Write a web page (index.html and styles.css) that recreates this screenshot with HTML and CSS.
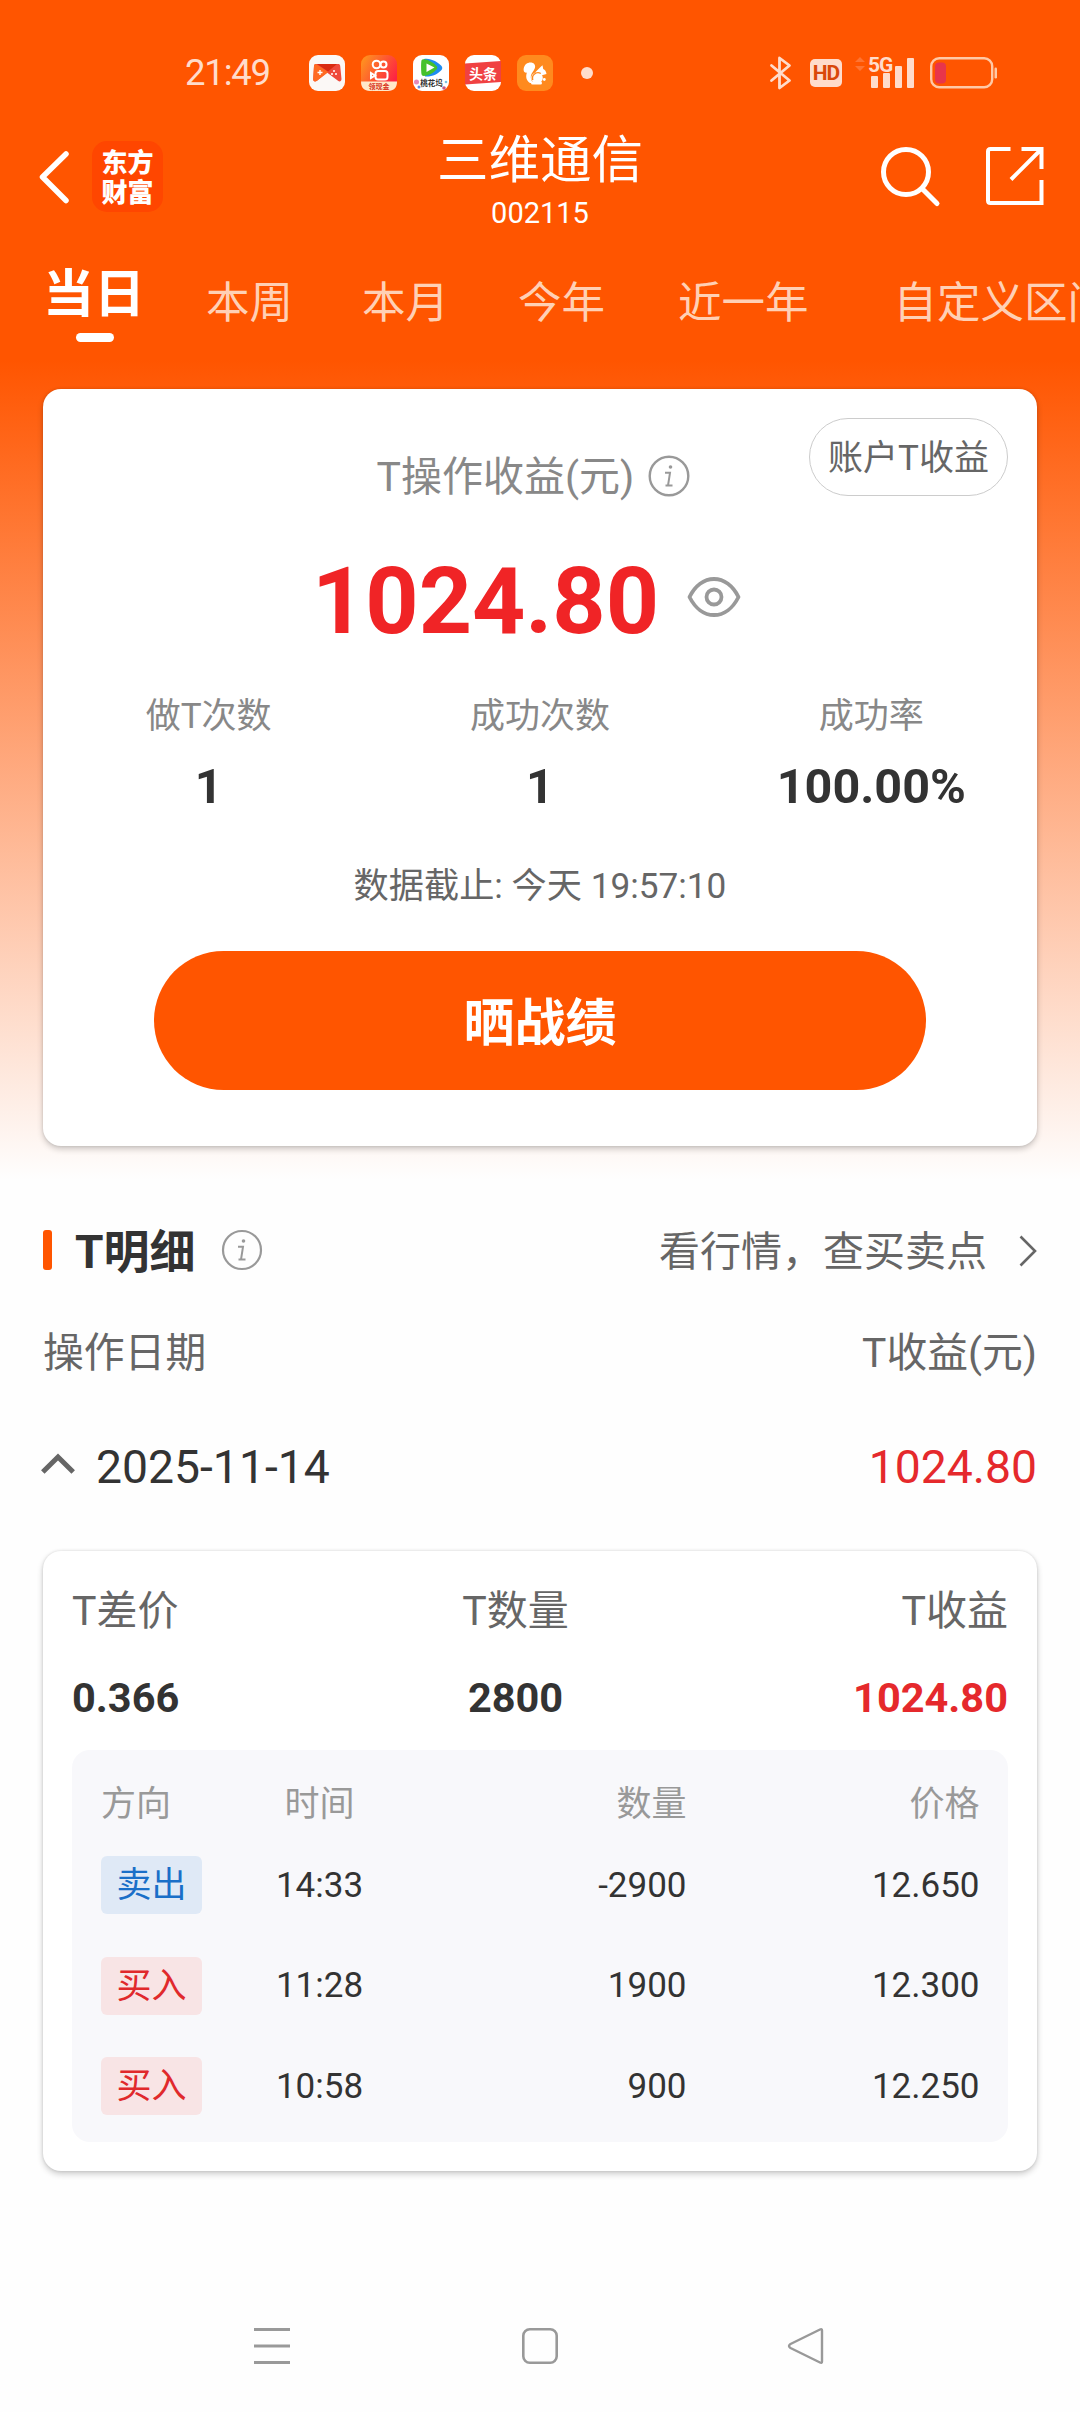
FILE: index.html
```html
<!DOCTYPE html>
<html lang="zh-CN">
<head>
  <meta charset="UTF-8">
  <meta name="viewport" content="width=device-width, initial-scale=1.0">
  <title>三维通信 002115</title>
  <link rel="stylesheet" href="styles.css">
</head>
<body>

  <!-- 状态栏 -->
  <div class="statusbar">
    <span class="statusbar__time">21:49</span>
    <div class="statusbar__apps">
      <svg width="36" height="36" viewBox="0 0 36 36">
        <rect width="36" height="36" rx="9" fill="#fbf8f6"/>
        <path d="M7 9h22c1.500 0 2 .5 2.200 2L32.500 24c0 2.500-2 3-3.500 1.800L18 17.500 8 25.800c-2 1.200-4 .7-3.800-1.800L5 11c.2-1.500.7-2 2-2z" fill="#ef4a3c"/>
        <path d="M5 11c.2-1.500.7-2 2-2l12.500 8L8 25.800c-2 1.200-4 .7-3.800-1.800z" fill="#ff6a22"/>
        <path d="M8 9h20l-9 7.500z" fill="#d92a10"/>
        <path d="M11 15v5M8.500 17.500h5" stroke="#fff" stroke-width="1.400"/>
        <circle cx="25" cy="16" r="1" fill="#fff"/><circle cx="23" cy="19" r="1" fill="#fff"/><circle cx="27" cy="19" r="1" fill="#fff"/>
      </svg>
      <svg width="36" height="36" viewBox="0 0 36 36">
        <defs><linearGradient id="ks" x1="0" y1="0" x2="1" y2=".6"><stop offset="0" stop-color="#ff9b1c"/><stop offset="1" stop-color="#fd2244"/></linearGradient></defs>
        <rect width="36" height="36" rx="9" fill="url(#ks)"/>
        <g fill="none" stroke="#fff" stroke-width="2">
          <circle cx="15.500" cy="9.500" r="3.800"/><circle cx="22.500" cy="9.500" r="3"/>
          <rect x="14.500" y="16" width="12" height="8.500" rx="2.500"/>
          <path d="M14 20.500l-4-2.500v5z"/>
        </g>
        <path d="M0 26.500h36c0 6-3 9.500-9 9.500H9c-6 0-9-3.500-9-9.500z" fill="#ffe9c9"/>
        <text class="app-text" x="18" y="33.500" font-size="7" fill="#d8321c">领现金</text>
      </svg>
      <svg width="36" height="36" viewBox="0 0 36 36">
        <rect width="36" height="36" rx="9" fill="#fff"/>
        <path d="M11 4c6-1.500 14 3 17.500 7 1 1.500 1 2.500 0 4C25 19 19 22 12 21.500z" fill="#1f8df0"/>
        <path d="M9.500 4.500c4-1 11 3 14 6.500 1 1 1 2.500 0 3.500-3 3.500-8 6-12.500 6.500-2 0-2.500-1-2.700-3C8 13 8 9 8.300 6.500c.1-1 .4-1.700 1.200-2z" fill="#45c12b"/>
        <path d="M13.500 8.500l8 4-8 4.500z" fill="#fff"/>
        <circle cx="3.500" cy="27" r="2.500" fill="#e58ab8"/><circle cx="6" cy="32" r="1.500" fill="#5e8de0"/><circle cx="31" cy="33" r="1.800" fill="#c45a84"/><circle cx="33" cy="27" r="1.300" fill="#7cc3e0"/>
        <text class="app-text" x="18.500" y="31" font-size="7.500" fill="#333">桃花坞</text>
      </svg>
      <svg width="36" height="36" viewBox="0 0 36 36">
        <rect width="36" height="36" rx="9" fill="#fff"/>
        <path d="M0 8.500L36 6v21L0 29.500z" fill="#f04142"/>
        <text class="app-text" x="18" y="23.500" font-size="14" fill="#fff">头条</text>
      </svg>
      <svg width="36" height="36" viewBox="0 0 36 36">
        <rect width="36" height="36" rx="9" fill="#ff8a1e"/>
        <path d="M13 28C9 25.500 8.500 21 10 17.500c-2.500 1-3.800-1.500-3.300-4C7.500 9 11 7 14.500 7.500c4 .8 4.500 4.500 2.500 7.500-1.800 2.700-3.500 4.500-3.200 7.500.2 2 .8 3.500 2.200 5.500z" fill="#fff"/>
        <path d="M18.500 17l5-5 2-1.800.7 3.800c1.800.8 3 2.500 3.300 5l-5.500 1.500z" fill="#fff"/>
        <circle cx="20" cy="23" r="5.800" fill="#fff"/><rect x="14" y="26.500" width="11" height="3" rx="1.500" fill="#fff"/>
        <path d="M15.800 25a5.500 5.500 0 0 1 8-6.500" fill="none" stroke="#ff8a1e" stroke-width="1.400"/>
        <circle cx="27.300" cy="24.500" r="1.400" fill="#fff"/>
      </svg>
    </div>
    <span class="statusbar__dot"></span>

    <div class="statusbar__right">
      <svg class="bt" width="22" height="34" viewBox="0 0 22 34" fill="none" stroke="#ffdccb" stroke-width="2.800" stroke-linejoin="round" stroke-linecap="round">
        <path d="M1.500 9.500l18 15L9.500 32V2l10 7.500-18 15"/>
      </svg>
      <span class="hd">HD</span>
      <svg class="signal" width="62" height="36" viewBox="0 0 62 36" fill="#ffdccb">
        <path d="M1 7l5-5 5 5zM1 11l5 5 5-5z" fill="#ff7433"/>
        <rect x="17" y="21" width="7" height="12" rx="1"/>
        <rect x="29" y="18" width="7" height="15" rx="1"/>
        <rect x="41" y="11" width="7" height="22" rx="1"/>
        <rect x="53" y="3" width="7" height="30" rx="1"/>
        <text class="net" x="14" y="16.500">5G</text>
      </svg>
      <svg class="battery" width="68" height="32" viewBox="0 0 68 32">
        <rect x="1.200" y="1.200" width="61" height="29" rx="8" fill="none" stroke="#ffc9a6" stroke-width="2.400"/>
        <rect x="5" y="5.500" width="11" height="21" rx="4" fill="#e8354a"/>
        <rect x="64.500" y="10.500" width="2.500" height="11" rx="1.200" fill="#ffc9a6"/>
      </svg>
    </div>
  </div>

  <!-- 标题栏 -->
  <header class="navbar">
    <div class="navbar__left">
      <svg width="32" height="56" viewBox="0 0 32 56" fill="none" stroke="#fff" stroke-width="5.500" stroke-linecap="round" stroke-linejoin="round">
        <path d="M28 5L4.500 28 28 51.500"/>
      </svg>
      <div class="logo"><span>东方</span><span>财富</span></div>
    </div>
    <div class="navbar__title">
      <h1>三维通信</h1>
      <p>002115</p>
    </div>
    <div class="navbar__right">
      <svg width="60" height="60" viewBox="0 0 60 60" fill="none" stroke="#fff" stroke-width="5" stroke-linecap="round">
        <circle cx="26" cy="26" r="22.500"/>
        <path d="M42.500 43L57 57.500"/>
      </svg>
      <svg width="58" height="60" viewBox="0 0 58 60" fill="none" stroke="#fff" stroke-width="4">
        <path d="M24.500 3H4.500Q2 3 2 5.500V54.500Q2 57 4.500 57H55.500V34"/>
        <path d="M35.500 3H55.500V23M55.500 3L25 33.500"/>
      </svg>
    </div>
  </header>

  <nav class="tabs">
    <a class="tab tab--active">当日</a>
    <a class="tab">本周</a>
    <a class="tab">本月</a>
    <a class="tab">今年</a>
    <a class="tab tab--year">近一年</a>
    <a class="tab tab--custom">自定义区间</a>
  </nav>

  <main>
    <!-- 收益卡片 -->
    <section class="card summary">
      <a class="summary__account">账户T收益</a>
      <div class="summary__label">
        T操作收益(元)
        <svg class="info" width="42" height="42" viewBox="0 0 42 42">
          <circle cx="21" cy="21" r="19.300" fill="none" stroke="#999" stroke-width="2.400"/>
          <circle cx="22.500" cy="12" r="1.800" fill="#999"/>
          <path d="M17 17.800h5L20 30.500h4.500M17.500 30.500h3" fill="none" stroke="#999" stroke-width="2"/>
        </svg>
      </div>
      <div class="summary__amount">
        <strong>1024.80</strong>
        <svg width="54" height="42" viewBox="0 0 54 42" fill="none" stroke="#999" stroke-width="3.800" stroke-linejoin="round">
          <path d="M2.500 21C8 10 17 3 27 3s19 7 24.500 18C46 32 37 39 27 39S8 32 2.500 21z"/>
          <circle cx="27" cy="21" r="7.500"/>
        </svg>
      </div>
      <div class="stats">
        <div><span>做T次数</span><b>1</b></div>
        <div><span>成功次数</span><b>1</b></div>
        <div><span>成功率</span><b>100.00%</b></div>
      </div>
      <p class="summary__time">数据截止: 今天 19:57:10</p>
      <button class="share">晒战绩</button>
    </section>

    <!-- T明细 -->
    <div class="section-head">
      <h2>T明细</h2>
      <svg class="info" width="42" height="42" viewBox="0 0 42 42">
        <circle cx="21" cy="21" r="19" fill="none" stroke="#999" stroke-width="2.200"/>
        <circle cx="22.500" cy="12" r="1.800" fill="#999"/>
        <path d="M17 17.800h5L20 30.500h4.500M17.500 30.500h3" fill="none" stroke="#999" stroke-width="2"/>
      </svg>
      <a class="section-head__more">看行情，查买卖点
        <svg width="18" height="32" viewBox="0 0 18 32" fill="none" stroke="#666" stroke-width="2.600"><path d="M1.500 1.500L16 16 1.500 30.500"/></svg>
      </a>
    </div>

    <div class="row row--head"><span>操作日期</span><span>T收益(元)</span></div>
    <div class="row row--day">
      <span>
        <svg width="34" height="22" viewBox="0 0 34 22" fill="none" stroke="#666" stroke-width="5"><path d="M1.800 20L17 5l15.200 15"/></svg>
        2025-11-14
      </span>
      <span class="red">1024.80</span>
    </div>

    <section class="card detail">
      <div class="detail__sum">
        <div><span>T差价</span><b>0.366</b></div>
        <div><span>T数量</span><b>2800</b></div>
        <div><span>T收益</span><b class="red">1024.80</b></div>
      </div>
      <div class="trades">
        <div class="trade trade--head"><span>方向</span><span>时间</span><span>数量</span><span>价格</span></div>
        <div class="trade"><span><i class="tag tag--sell">卖出</i></span><span>14:33</span><span>-2900</span><span>12.650</span></div>
        <div class="trade"><span><i class="tag tag--buy">买入</i></span><span>11:28</span><span>1900</span><span>12.300</span></div>
        <div class="trade"><span><i class="tag tag--buy">买入</i></span><span>10:58</span><span>900</span><span>12.250</span></div>
      </div>
    </section>
  </main>

  <!-- 系统导航 -->
  <footer class="sysnav">
    <svg width="40" height="40" viewBox="0 0 40 40" stroke="#999" stroke-width="2.800"><path d="M2 3.500h36M2 20h36M2 36.500h36"/></svg>
    <svg width="40" height="40" viewBox="0 0 40 40" fill="none" stroke="#999" stroke-width="2.600"><rect x="3.300" y="3.300" width="33.400" height="33.400" rx="6.500"/></svg>
    <svg width="40" height="40" viewBox="0 0 40 40" fill="none" stroke="#999" stroke-width="2.400" stroke-linejoin="round"><path d="M34 4.500v31q0 2-2 1L2.500 22q-3-2 0-4L32 3.500q2-1 2 1z"/></svg>
  </footer>

</body>
</html>
```

FILE: styles.css
```css
:root{
  --accent:#ff5500;
  --red:#e5292c;
  --text:#333;
  --muted:#666;
  --light:#888;
}
*{margin:0;padding:0;box-sizing:border-box;}
body{
  width:1080px;height:2412px;overflow:hidden;
  display:flex;flex-direction:column;
  font-family:Roboto,"Noto Sans CJK SC",sans-serif;
  color:var(--text);
  background:#fefefe linear-gradient(to bottom,var(--accent) 360px,#fefefe 1180px) no-repeat;
}
svg{display:block;flex:none;overflow:visible;}
.red{color:var(--red);}

/* Status bar */
.statusbar{height:110px;padding:36px 82px 0 185px;display:flex;align-items:center;color:#ffdccb;}
.statusbar__time{width:124px;font-size:36.5px;letter-spacing:-1.2px;line-height:40px;}
.statusbar__apps{display:flex;gap:16px;}
.statusbar__dot{width:12px;height:12px;border-radius:50%;background:#ffdccb;margin-left:28px;}
.statusbar__right{display:flex;align-items:center;margin-left:auto;}
.app-text{font-family:"Noto Sans CJK SC",sans-serif;font-weight:700;text-anchor:middle;}
.hd{width:32px;height:28px;margin-left:18px;border-radius:5px;background:#ffdccb;color:#d9480a;
    font-size:21px;line-height:28px;font-weight:700;text-align:center;letter-spacing:-1px;}
.signal{margin-left:12px;}
.net{font-size:21px;font-weight:700;letter-spacing:-1px;}
.battery{margin-left:14px;}

/* Title bar */
.navbar{height:130px;padding:0 36px 0 38px;display:flex;justify-content:space-between;}
.navbar__left{width:282px;display:flex;gap:22px;align-items:center;height:133px;}
.logo{width:71px;height:71px;border-radius:15px;background:#ff4600;color:#fff;
      font-family:"Noto Sans CJK SC",sans-serif;font-weight:900;font-size:26px;
      display:flex;flex-direction:column;align-items:center;padding-top:5px;}
.logo span{line-height:30px;}
.navbar__title{text-align:center;color:#fff;padding-top:21px;}
h1{font-size:51.5px;line-height:60px;font-weight:400;}
.navbar__title p{font-size:29px;line-height:34px;margin-top:5px;}
.navbar__right{width:284px;display:flex;justify-content:flex-end;gap:46px;padding-top:36px;}

/* Tabs */
.tabs{height:149px;padding-left:43px;display:flex;white-space:nowrap;overflow:hidden;}
.tab{flex:none;font-size:43.5px;line-height:50px;padding-top:39px;margin-left:69px;color:#ffd0b5;}
.tab--active{font-size:51px;line-height:60px;padding-top:25px;margin-left:0;font-weight:700;color:#fff;margin-right:-8px;}
.tab--active::after{content:'';display:block;width:38px;height:9px;border-radius:5px;background:#fff;margin:8px auto 0 33px;}
.tab--year{margin-left:73px;}
.tab--custom{margin-left:85px;}

/* Cards */
main{padding:0 43px;flex:1;}
.card{background:#fff;border-radius:18px;box-shadow:0 3px 6px rgba(0,0,0,.2),0 0 3px rgba(0,0,0,.12);}
.summary{height:757px;position:relative;text-align:center;padding-top:62px;}
.summary__account{position:absolute;top:29px;right:29px;width:199px;height:78px;border:1.500px solid #ccc;border-radius:39px;
                  font-size:35px;line-height:79px;color:var(--muted);}
.summary__label{display:flex;justify-content:center;align-items:center;gap:14px;font-size:41px;line-height:52px;color:var(--light);margin-right:13px;}
.summary__label .info{margin-top:-2px;}
.summary__amount{display:flex;justify-content:center;align-items:center;gap:28px;height:100px;margin-top:49px;margin-right:27px;}
.summary__amount strong{font-size:93px;line-height:100px;color:#f02426;}
.summary__amount svg{margin-top:-10px;}
.stats{display:flex;margin-top:42px;}
.stats div{flex:1;display:flex;flex-direction:column;}
.stats span{font-size:35px;line-height:46px;color:var(--light);}
.stats b{font-size:48.500px;line-height:60px;margin-top:17px;}
.summary__time{font-size:35.2px;line-height:46px;margin-top:46px;color:var(--muted);}
.share{display:block;width:772px;height:139px;margin:42px auto 0;padding-bottom:4px;border:0;border-radius:70px;background:var(--accent);color:#fff;
       font-family:inherit;font-size:51px;font-weight:700;}

/* Section heading */
.section-head{display:flex;align-items:center;height:60px;margin-top:76px;}
.section-head h2{font-size:46px;line-height:62px;display:flex;align-items:center;margin-right:25px;}
.section-head h2::before{content:'';width:9px;height:40px;border-radius:3px;background:var(--accent);margin-right:23px;margin-top:-4px;}
.section-head .info{margin-top:-4px;}
.section-head__more{margin-left:auto;display:flex;align-items:center;gap:32px;font-size:41px;line-height:56px;color:var(--muted);margin-right:0;}
.section-head__more svg{margin-top:-3px;}
.row{display:flex;justify-content:space-between;align-items:center;}
.row--head{height:60px;margin-top:37px;font-size:40.8px;color:var(--muted);}
.row--day{height:60px;margin-top:58px;font-size:46.3px;}
.row--day span:first-child{display:flex;align-items:center;gap:21px;margin-left:-2px;}
.row--day svg{margin-top:-8px;}

/* Detail card */
.detail{height:620px;margin-top:54px;padding:30px 29px 29px;}
.detail__sum{display:flex;justify-content:space-between;font-size:41px;}
.detail__sum div{display:flex;flex-direction:column;width:180px;}
.detail__sum div:nth-child(2){align-items:center;margin-right:49px;}
.detail__sum div:last-child{align-items:flex-end;}
.detail__sum span{line-height:60px;color:var(--muted);}
.detail__sum b{font-size:41.5px;line-height:60px;margin-top:27px;}
.trades{height:392px;margin-top:22px;padding:16px 29px 0;border-radius:18px;background:#f8f8fb;}
.trade{display:grid;grid-template-columns:101px 235px 249.5px 293px;align-items:center;height:100.5px;font-size:35px;}
.trade span:nth-child(2){text-align:center;}
.trade span:nth-child(n+3){text-align:right;}
.trade--head{height:69px;color:#999;}
.tag{display:block;width:101px;height:58px;line-height:59px;border-radius:6px;text-align:center;font-style:normal;}
.tag--sell{background:#dfe9f6;color:#1a6fc8;}
.tag--buy{background:#f8e4e5;color:#e0292c;}

/* System bar */
.sysnav{height:132px;padding:0 252px;display:flex;justify-content:space-between;align-items:center;}
```
